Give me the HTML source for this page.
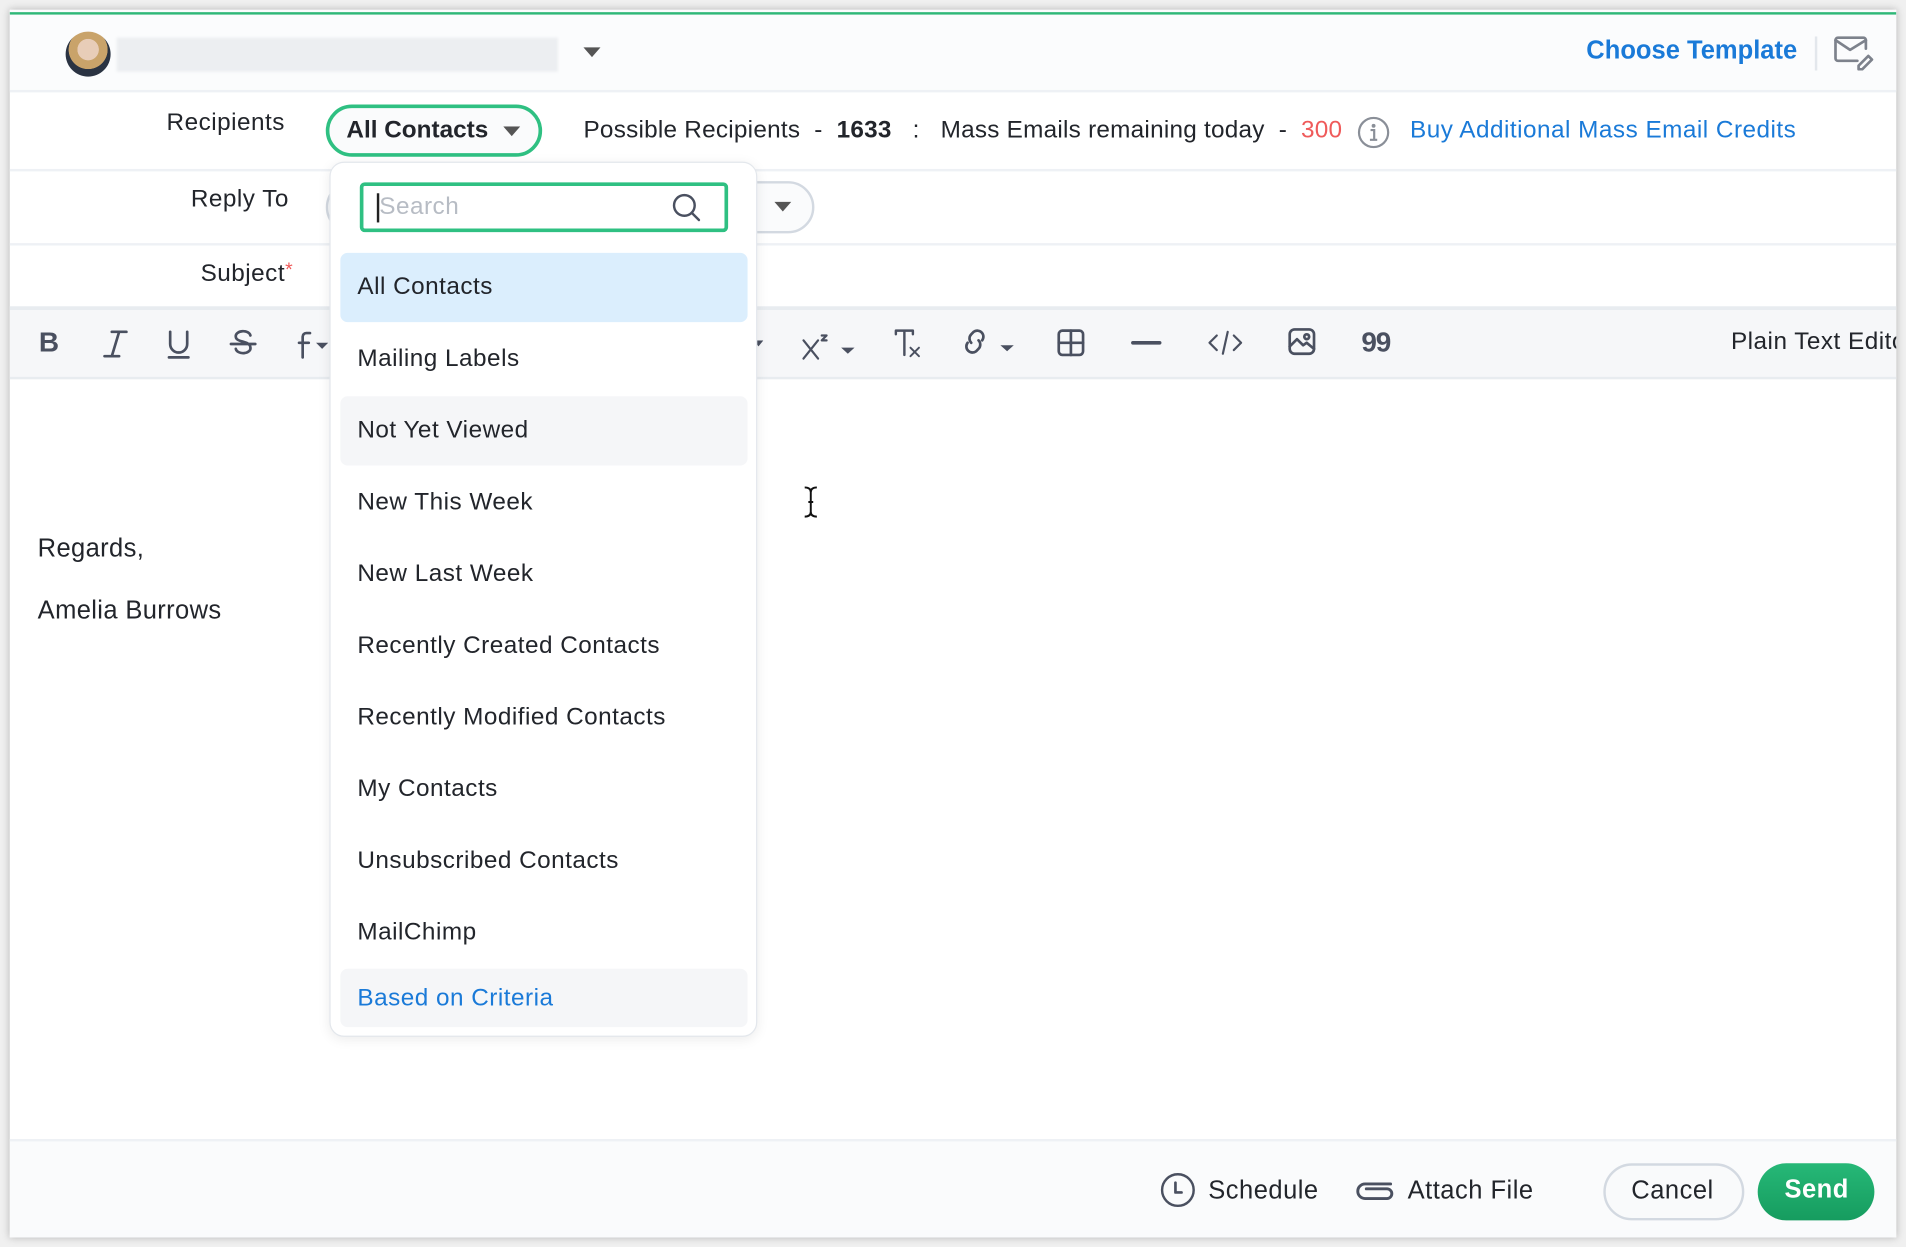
<!DOCTYPE html>
<html><head><meta charset="utf-8">
<style>
*{box-sizing:border-box;margin:0;padding:0}
html,body{width:1906px;height:1246px;overflow:hidden;background:#fff}
#w{position:absolute;left:0;top:0;width:1568px;height:1026px;transform:scale(1.21556);transform-origin:0 0;font-family:"Liberation Sans",sans-serif;color:#22252b;background:#f0f0f0}
.card{position:absolute;left:8px;top:8px;width:1552px;height:1010px;background:#fff;box-shadow:0 0 6px rgba(0,0,0,.25);overflow:hidden}
.ab{position:absolute}
.t{position:absolute;font-size:20px;white-space:nowrap;letter-spacing:0.4px}
.hl{position:absolute;left:0;width:1552px;height:2px;background:#eef1f5}
.ic{position:absolute;stroke:#4a5060;fill:none;stroke-width:2.2;stroke-linecap:round;stroke-linejoin:round}
.dd{position:absolute;left:263px;top:125px;width:352px;height:720px;background:#fff;border:1px solid #e3e7ec;border-radius:12px;box-shadow:0 2px 10px rgba(0,0,0,.08)}
.it{position:absolute;left:8px;width:335px;height:57px;border-radius:6px;font-size:20px;padding-left:14px;line-height:57px;color:#22252b;letter-spacing:0.4px}
</style></head><body><div id="w">
<div class="card">
<div class="ab" style="left:0;top:0;width:1552px;height:67px;background:#fbfcfd"></div>
<div class="ab" style="left:0;top:2px;width:1552px;height:2px;background:#2fb878"></div>
<div class="ab" style="left:46px;top:18px;width:37px;height:37px;border-radius:50%;background:radial-gradient(circle at 50% 40%,#e8cdb8 0 30%,#c9a36a 31% 55%,#2a3342 56%)"></div>
<div class="ab" style="left:88px;top:23px;width:363px;height:28px;background:#eceef1;filter:blur(1px)"></div>
<svg class="ab" style="left:472px;top:30px" width="14" height="10"><path d="M0 1h14L7 9z" fill="#555"/></svg>
<div class="t" style="left:1297px;top:22px;color:#1a7ad8;font-weight:bold;font-size:21px;letter-spacing:0">Choose Template</div>
<div class="ab" style="left:1485px;top:22px;width:2px;height:28px;background:#e3e7ec"></div>
<svg class="ic" style="left:1500px;top:20px;stroke:#7d828c" width="34" height="30"><path d="M20 22H4a2 2 0 0 1-2-2V5a2 2 0 0 1 2-2h21a2 2 0 0 1 2 2v7"/><path d="M2 5l12 8 13-8"/><path d="M21 26l8-8 3 3-8 8h-3z"/></svg>
<div class="hl" style="top:66px"></div>
<div class="t" style="left:129px;top:82px">Recipients</div>
<div class="ab" style="left:260px;top:78px;width:178px;height:43px;border:3px solid #2fc082;border-radius:22px;background:#fafbfc"></div>
<div class="t" style="left:277px;top:88px;font-weight:bold;letter-spacing:0">All Contacts</div>
<svg class="ab" style="left:406px;top:96px" width="14" height="9"><path d="M0 0h14L7 8z" fill="#555"/></svg>
<div class="t" style="left:472px;top:88px;letter-spacing:0.2px">Possible Recipients&nbsp; - &nbsp;<b>1633</b> &nbsp; : &nbsp; Mass Emails remaining today&nbsp; - &nbsp;<span style="color:#ef5a5a">300</span></div>
<svg class="ab" style="left:1108px;top:87px" width="28" height="28"><circle cx="14" cy="14" r="12" fill="none" stroke="#8a8f98" stroke-width="1.8"/><circle cx="14" cy="8.5" r="1.6" fill="#8a8f98"/><path d="M11.5 12h3v8M11 20h6" stroke="#8a8f98" stroke-width="1.8" fill="none"/></svg>
<div class="t" style="left:1152px;top:88px;color:#1a7ad8">Buy Additional Mass Email Credits</div>
<div class="hl" style="top:131px"></div>
<div class="t" style="left:149px;top:145px">Reply To</div>
<div class="ab" style="left:260px;top:141px;width:402px;height:43px;border:2px solid #d3d9e1;border-radius:22px;background:#fafbfc"></div>
<svg class="ab" style="left:629px;top:158px" width="14" height="9"><path d="M0 0h14L7 8z" fill="#555"/></svg>
<div class="hl" style="top:192px"></div>
<div class="t" style="left:157px;top:206px">Subject<span style="color:#ef5a5a;font-size:16px;vertical-align:top">*</span></div>
<div class="ab" style="left:0;top:244px;width:1552px;height:60px;background:#f6f7f9;border-top:3px solid #e8ecf0;border-bottom:2px solid #e8ecf0"></div>
<div class="t" style="left:24px;top:260px;font-size:23px;color:#4a5060;font-weight:bold">B</div>
<svg class="ic" style="left:74px;top:262px" width="26" height="26"><path d="M10 3h12M4 23h12M16 3L10 23"/></svg>
<svg class="ic" style="left:128px;top:262px" width="22" height="26"><path d="M4 3v10a7 7 0 0 0 14 0V3M3 24h16"/></svg>
<svg class="ic" style="left:180px;top:262px" width="24" height="26"><path d="M18 6a6 4 0 0 0-12 1c0 5 12 3 12 9a6 4 0 0 1-12 1M2 13h20"/></svg>
<svg class="ic" style="left:234px;top:262px" width="30" height="26"><path d="M13 4h-3a3 3 0 0 0-3 3v17M4 12h8"/><path d="M18 12h10l-5 5z" fill="#4a5060" stroke="none"/></svg>
<svg class="ab" style="left:612px;top:272px" width="8" height="6"><path d="M0 0h8L4 5z" fill="#4a5060"/></svg>
<svg class="ic" style="left:650px;top:262px" width="50" height="28"><path d="M3 10l12 15M15 10L3 25M18 6h4l-4 4h4" stroke-width="1.8"/><path d="M34 16h11l-5.5 5z" fill="#4a5060" stroke="none"/></svg>
<svg class="ic" style="left:726px;top:260px" width="26" height="28"><path d="M3 4h14M10 4v20M17 4v3M3 4v3" stroke-width="2"/><path d="M15 18l7 7M22 18l-7 7" stroke-width="1.6"/></svg>
<svg class="ic" style="left:782px;top:260px" width="50" height="28"><path d="M9 14a5 5 0 0 1 0-7l2-2a5 5 0 0 1 7 7M15 12a5 5 0 0 1 0 7l-2 2a5 5 0 0 1-7-7"/><path d="M33 16h11l-5.5 5z" fill="#4a5060" stroke="none"/></svg>
<svg class="ic" style="left:860px;top:261px" width="26" height="26"><rect x="3" y="3" width="20" height="20" rx="3"/><path d="M13 3v20M3 13h20"/></svg>
<svg class="ic" style="left:922px;top:261px" width="26" height="26"><path d="M2 13h22" stroke-width="3"/></svg>
<svg class="ic" style="left:984px;top:261px" width="32" height="26"><path d="M9 7l-6 6 6 6M23 7l6 6-6 6M18 4l-4 18" stroke-width="1.8"/></svg>
<svg class="ic" style="left:1050px;top:260px" width="26" height="26"><rect x="3" y="3" width="20" height="20" rx="4"/><path d="M3 17l6-6 5 5 3-2 6 5"/><circle cx="17" cy="9" r="2"/></svg>
<div class="t" style="left:1112px;top:260px;font-size:23px;color:#4a5060;font-weight:bold;letter-spacing:-1px">99</div>
<div class="t" style="left:1416px;top:262px">Plain Text Editor</div>
<div class="t" style="left:23px;top:432px;font-size:21px;letter-spacing:0.3px">Regards,</div>
<div class="t" style="left:23px;top:483px;font-size:21px;letter-spacing:0.3px">Amelia Burrows</div>
<svg class="ab" style="left:651px;top:390px" width="16" height="30"><path d="M3 3q5 0 5 4v16q0 4 5 4M13 3q-5 0-5 4M8 23q0 4-5 4M6 15h4" stroke="#111" stroke-width="1.6" fill="none"/></svg>
<div class="ab" style="left:0;top:929px;width:1552px;height:81px;background:#fafbfc;border-top:2px solid #eef1f5"></div>
<svg class="ic" style="left:946px;top:956px" width="30" height="30"><circle cx="15" cy="15" r="13" stroke-width="2"/><path d="M13 9v8h5"/></svg>
<div class="t" style="left:986px;top:960px;font-size:21px">Schedule</div>
<svg class="ic" style="left:1106px;top:960px" width="34" height="22"><path d="M30 6H9a6 6 0 0 0 0 12h18a4 4 0 0 0 0-8H10" stroke-width="2.4"/></svg>
<div class="t" style="left:1150px;top:960px;font-size:21px">Attach File</div>
<div class="ab" style="left:1311px;top:949px;width:116px;height:47px;border:2px solid #d3d9e1;border-radius:24px;background:#f9fafb"></div>
<div class="t" style="left:1334px;top:960px;font-size:21px">Cancel</div>
<div class="ab" style="left:1438px;top:949px;width:96px;height:47px;border-radius:24px;background:linear-gradient(#26b877,#169c5f)"></div>
<div class="t" style="left:1460px;top:959px;font-size:21px;color:#fff;font-weight:bold">Send</div>
<div class="dd">
<div class="ab" style="left:24px;top:16px;width:303px;height:41px;border:3px solid #2fc082;border-radius:4px;background:#fff"></div>
<div class="ab" style="left:38px;top:25px;width:2px;height:24px;background:#222"></div>
<div class="t" style="left:40px;top:25px;color:#b7bcc4">Search</div>
<svg class="ic" style="left:280px;top:24px;stroke:#4a5060" width="26" height="26"><circle cx="11" cy="11" r="8.5" stroke-width="2"/><path d="M17 17l6 6" stroke-width="2"/></svg>
<div class="it" style="top:74px;background:#dbeefd">All Contacts</div>
<div class="it" style="top:133px">Mailing Labels</div>
<div class="it" style="top:192px;background:#f5f6f8">Not Yet Viewed</div>
<div class="it" style="top:251px">New This Week</div>
<div class="it" style="top:310px">New Last Week</div>
<div class="it" style="top:369px">Recently Created Contacts</div>
<div class="it" style="top:428px">Recently Modified Contacts</div>
<div class="it" style="top:487px">My Contacts</div>
<div class="it" style="top:546px">Unsubscribed Contacts</div>
<div class="it" style="top:605px">MailChimp</div>
<div class="it" style="top:663px;height:48px;line-height:48px;background:#f5f6f8;color:#1a7ad8">Based on Criteria</div>
</div>
</div>
</div></body></html>
